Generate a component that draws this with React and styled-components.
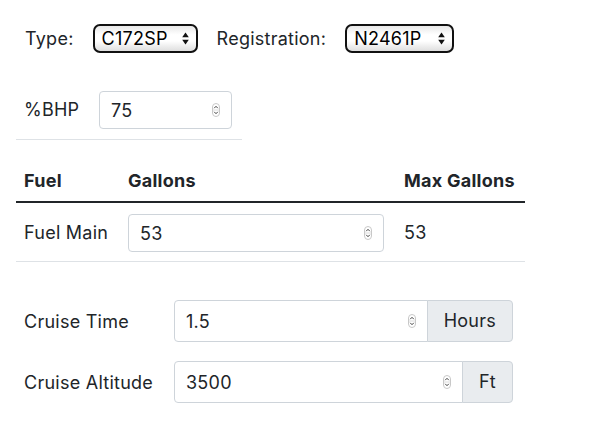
import React from 'react';
import styled, { createGlobalStyle } from 'styled-components';

const GlobalStyle = createGlobalStyle`
    body {
        margin: 0;
        background: #fff;
        color: #212529;
        font-family: Inter, "Noto Sans", "Liberation Sans", sans-serif;
        font-size: 18px;
        line-height: 24px;
        letter-spacing: 0.25px;
    }
    * { box-sizing: border-box; }
`;

function Spinner() {
    return (
        <SpinIcon width="8" height="14" viewBox="0 0 8 14">
            <rect x="0.5" y="0.5" width="7" height="13" rx="3.5" fill="#fff" stroke="#c8c8c8" />
            <line x1="1" y1="7" x2="7" y2="7" stroke="#dcdcdc" />
            <path d="M2.2 5.2 L4 3.3 L5.8 5.2" fill="none" stroke="#444" strokeWidth="1" />
            <path d="M2.2 8.8 L4 10.7 L5.8 8.8" fill="none" stroke="#444" strokeWidth="1" />
        </SpinIcon>
    );
}

function NumberField({ value, width, height, flat }) {
    return (
        <FieldWrap $width={width} $height={height}>
            <NumInput type="number" defaultValue={value} $flat={flat} />
            <Spinner />
        </FieldWrap>
    );
}

function Select({ value, width }) {
    return (
        <SelectWrap $width={width}>
            <NativeSelect defaultValue={value}>
                <option>{value}</option>
            </NativeSelect>
            <Arrows width="7" height="13" viewBox="0 0 7 13">
                <path d="M3.5 0.5 L6.8 5.3 L0.2 5.3 Z" fill="#111" />
                <path d="M3.5 12.5 L6.8 7.7 L0.2 7.7 Z" fill="#111" />
            </Arrows>
        </SelectWrap>
    );
}

function App() {
    return (
        <Page>
            <GlobalStyle />
            <TopBar>
                <Label>Type:</Label>
                <Select value="C172SP" width={105} />
                <Label>Registration:</Label>
                <Select value="N2461P" width={109} />
            </TopBar>

            <PowerTable>
                <Cell>%BHP</Cell>
                <Cell $pr={10}>
                    <NumberField value="75" width={133} height={38} />
                </Cell>
            </PowerTable>

            <FuelTable>
                <HeadCell>Fuel</HeadCell>
                <HeadCell>Gallons</HeadCell>
                <HeadCell>Max Gallons</HeadCell>
                <RowCell>Fuel Main</RowCell>
                <RowCell>
                    <NumberField value="53" width={256} height={38} />
                </RowCell>
                <RowCell>53</RowCell>
            </FuelTable>

            <CruiseForm>
                <FormLabel>Cruise Time</FormLabel>
                <InputGroup>
                    <NumberField value="1.5" height={42} flat />
                    <Addon>Hours</Addon>
                </InputGroup>
                <FormLabel>Cruise Altitude</FormLabel>
                <InputGroup>
                    <NumberField value="3500" height={42} flat />
                    <Addon>Ft</Addon>
                </InputGroup>
            </CruiseForm>
        </Page>
    );
}

const Page = styled.div`
    padding: 24px 16px 20px 16px;
`;

const TopBar = styled.div`
    display: flex;
    align-items: center;
    gap: 19px;
    height: 29px;
    padding-left: 9px;
`;

const Label = styled.span`
    color: #212529;
`;

const SelectWrap = styled.div`
    position: relative;
    width: ${p => p.$width}px;
    height: 29px;
`;

const NativeSelect = styled.select`
    appearance: none;
    -webkit-appearance: none;
    width: 100%;
    height: 100%;
    margin: 0;
    padding: 0 0 0 7px;
    border: 2px solid #111;
    border-radius: 7px;
    background: linear-gradient(#e8e8e8 0%, #fff 35%, #fff 60%, #dedede 100%);
    font-family: inherit;
    font-size: 18px;
    letter-spacing: inherit;
    color: #000;
    outline: none;
`;

const Arrows = styled.svg`
    position: absolute;
    right: 9px;
    top: 8px;
    pointer-events: none;
`;

const PowerTable = styled.div`
    display: grid;
    grid-template-columns: 75px 1fr;
    width: 226px;
    margin-top: 31px;
    border-bottom: 1px solid #dee2e6;
`;

const Cell = styled.div`
    display: flex;
    align-items: center;
    padding: 7px ${p => p.$pr || 8}px 10px 8px;
`;

const FuelTable = styled.div`
    display: grid;
    grid-template-columns: 104px 276px 1fr;
    width: 509px;
    margin-top: 21px;
`;

const HeadCell = styled.div`
    padding: 8px 8px;
    font-weight: 700;
    border-bottom: 2px solid #212529;
`;

const RowCell = styled.div`
    display: flex;
    align-items: center;
    padding: 11px 8px 9px 8px;
    border-bottom: 1px solid #dee2e6;
`;

const CruiseForm = styled.div`
    display: grid;
    grid-template-columns: 158px 339px;
    row-gap: 19px;
    align-items: center;
    margin-top: 38px;
`;

const FormLabel = styled.div`
    padding-left: 8px;
    padding-top: 2px;
`;

const InputGroup = styled.div`
    display: flex;
    height: 42px;
`;

const FieldWrap = styled.div`
    position: relative;
    width: ${p => (p.$width ? `${p.$width}px` : 'auto')};
    flex: ${p => (p.$width ? 'none' : '1 1 auto')};
    height: ${p => p.$height}px;
`;

const NumInput = styled.input`
    width: 100%;
    height: 100%;
    margin: 0;
    padding: 0 28px 0 11px;
    border: 1px solid #ced4da;
    border-radius: ${p => (p.$flat ? '4px 0 0 4px' : '4px')};
    font-family: inherit;
    font-size: 18px;
    letter-spacing: inherit;
    color: #212529;
    background: #fff;
    outline: none;
    -moz-appearance: textfield;
    &::-webkit-inner-spin-button,
    &::-webkit-outer-spin-button {
        -webkit-appearance: none;
        margin: 0;
    }
`;

const SpinIcon = styled.svg`
    position: absolute;
    right: 12px;
    top: 50%;
    transform: translateY(-50%);
    pointer-events: none;
`;

const Addon = styled.div`
    display: flex;
    align-items: center;
    padding: 0 16px;
    margin-left: -1px;
    background: #e9ecef;
    border: 1px solid #ced4da;
    border-radius: 0 4px 4px 0;
    color: #212529;
`;

export default App;
